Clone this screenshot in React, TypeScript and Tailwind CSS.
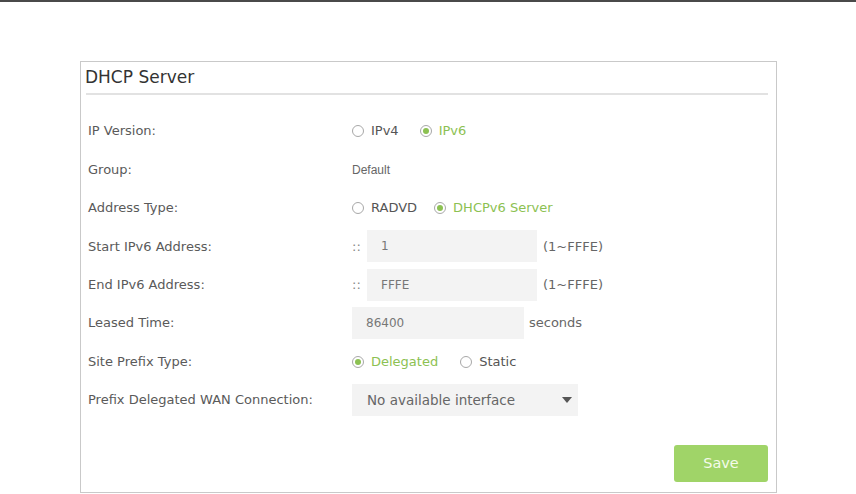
import type { ReactNode } from "react";

const labelFont = { fontFamily: '"DejaVu Sans", Verdana, sans-serif' };

function Radio({ checked, label }: { checked?: boolean; label: string }) {
  return (
    <span className="flex items-center gap-[7px]">
      <span className="flex h-[12px] w-[12px] items-center justify-center rounded-full border border-[#a8a8a8] bg-white">
        {checked && <span className="h-[6px] w-[6px] rounded-full bg-[#8cc152]" />}
      </span>
      <span className={checked ? "text-[#8cc152]" : "text-[#555]"}>{label}</span>
    </span>
  );
}

function Row({ label, children }: { label: string; children: ReactNode }) {
  return (
    <div className="flex h-[38.4px] items-center">
      <div className="w-[266px] pl-[2px] text-[13px] text-[#5a5a5a]">{label}</div>
      <div className="flex items-center text-[13px]">{children}</div>
    </div>
  );
}

function Field({ value, width }: { value: string; width: string }) {
  return (
    <div className={`flex h-[32px] items-center bg-[#f3f3f3] pl-[14px] text-[12px] text-[#777] ${width}`}>
      {value}
    </div>
  );
}

export default function App() {
  return (
    <div className="h-[494px] border-t-2 border-[#4a4a4a] bg-white" style={labelFont}>
      <div className="ml-[80px] mt-[59px] w-[697px] border border-[#c9c9c9] pb-[10px] pl-[5px] pr-[8px]">
        <div className="border-b-2 border-[#e2e2e2] pb-[4px] pt-[3px] text-[17px] leading-[24px] text-[#333]">
          <span className="-ml-[1px]">DHCP Server</span>
        </div>
        <div className="mt-[17px]">
          <Row label="IP Version:">
            <span className="flex gap-[21px]">
              <Radio label="IPv4" />
              <Radio checked label="IPv6" />
            </span>
          </Row>
          <Row label="Group:">
            <span className="text-[12px] text-[#666]" style={{ fontFamily: '"Liberation Sans", Arial, sans-serif' }}>
              Default
            </span>
          </Row>
          <Row label="Address Type:">
            <span className="flex gap-[17px]">
              <Radio label="RADVD" />
              <Radio checked label="DHCPv6 Server" />
            </span>
          </Row>
          <Row label="Start IPv6 Address:">
            <span className="w-[15px] text-[#888]">::</span>
            <Field value="1" width="w-[170px]" />
            <span className="ml-[6px] text-[#666]">(1~FFFE)</span>
          </Row>
          <Row label="End IPv6 Address:">
            <span className="w-[15px] text-[#888]">::</span>
            <Field value="FFFE" width="w-[170px]" />
            <span className="ml-[6px] text-[#666]">(1~FFFE)</span>
          </Row>
          <Row label="Leased Time:">
            <Field value="86400" width="w-[172px]" />
            <span className="ml-[5px] text-[#666]">seconds</span>
          </Row>
          <Row label="Site Prefix Type:">
            <span className="flex gap-[22px]">
              <Radio checked label="Delegated" />
              <Radio label="Static" />
            </span>
          </Row>
          <Row label="Prefix Delegated WAN Connection:">
            <div className="flex h-[32px] w-[226px] items-center justify-between bg-[#f3f3f3] pl-[15px] pr-[5px] text-[13.5px] text-[#666]">
              <span>No available interface</span>
              <svg width="12" height="8" viewBox="0 0 12 8">
                <path d="M1 1h10L6 7z" fill="#555" />
              </svg>
            </div>
          </Row>
        </div>
        <div className="mt-[26px] flex justify-end">
          <button className="h-[37px] w-[94px] rounded-[3px] bg-[#a0d468] text-[14.5px] text-[#f4fbea]">Save</button>
        </div>
      </div>
    </div>
  );
}
